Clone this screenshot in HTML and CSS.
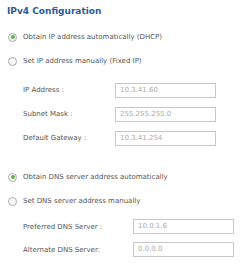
FILE: index.html
```html
<!DOCTYPE html>
<html lang="en">
	<head>
		<meta charset="UTF-8">
		<meta name="viewport" content="width=device-width, initial-scale=1">
		<title>IPv4 Configuration</title>
		<link rel="stylesheet" href="styles.css">
	</head>
	<body>
		<div class="page">
			<h1 class="title">IPv4 Configuration</h1>

			<div class="group">
				<div class="radio-row">
					<span class="radio checked"></span>
					<span class="radio-text">Obtain IP address automatically (DHCP)</span>
				</div>
				<div class="radio-row">
					<span class="radio"></span>
					<span class="radio-text">Set IP address manually (Fixed IP)</span>
				</div>
			</div>

			<div class="fields ip-fields">
				<div class="field-row">
					<span class="label">IP Address :</span>
					<span class="input">10.3.41.60</span>
				</div>
				<div class="field-row">
					<span class="label">Subnet Mask :</span>
					<span class="input">255.255.255.0</span>
				</div>
				<div class="field-row">
					<span class="label">Default Gateway :</span>
					<span class="input">10.3.41.254</span>
				</div>
			</div>

			<div class="group dns-group">
				<div class="radio-row">
					<span class="radio checked"></span>
					<span class="radio-text">Obtain DNS server address automatically</span>
				</div>
				<div class="radio-row">
					<span class="radio"></span>
					<span class="radio-text">Set DNS server address manually</span>
				</div>
			</div>

			<div class="fields dns-fields">
				<div class="field-row">
					<span class="label">Preferred DNS Server :</span>
					<span class="input">10.0.1.6</span>
				</div>
				<div class="field-row">
					<span class="label">Alternate DNS Server:</span>
					<span class="input">0.0.0.0</span>
				</div>
			</div>
		</div>
	</body>
</html>
```

FILE: styles.css
```css
*{
	margin: 0;
	padding: 0;
	box-sizing: border-box;
}
body{
	background: #fff;
	font-family: "DejaVu Sans", Verdana, sans-serif;
	color: #444;
}
.page{
	width: 243px;
	height: 270px;
	padding: 4px 0 0 7px;
}
.title{
	height: 14px;
	line-height: 14px;
	font-size: 9px;
	font-weight: bold;
	color: #2f5b98;
}
.group{
	margin-top: 7px;
}
.dns-group{
	margin-top: 15px;
}
.radio-row{
	display: flex;
	align-items: center;
	height: 24px;
}
.radio{
	width: 9px;
	height: 9px;
	margin-left: 1px;
	border: 1px solid #a9a9a9;
	border-radius: 50%;
	background: #fafafa;
	display: flex;
	align-items: center;
	justify-content: center;
}
.radio.checked::after{
	content: '';
	width: 4px;
	height: 4px;
	border-radius: 50%;
	background: #5fb04a;
}
.radio-text{
	margin-left: 6px;
	font-size: 7px;
	color: #555;
}
.fields{
	margin-top: 5px;
	padding-left: 16px;
}
.dns-fields{
	margin-top: 2px;
}
.field-row{
	display: flex;
	align-items: center;
	height: 24px;
}
.dns-fields .field-row{
	height: 23px;
}
.label{
	font-size: 7px;
	color: #555;
}
.ip-fields .label{
	width: 92px;
}
.dns-fields .label{
	width: 110px;
}
.input{
	width: 101px;
	height: 15px;
	border: 1px solid #c8c8c8;
	background: #fff;
	padding-left: 4px;
	font-size: 7px;
	line-height: 13px;
	color: #aaa;
}
```
